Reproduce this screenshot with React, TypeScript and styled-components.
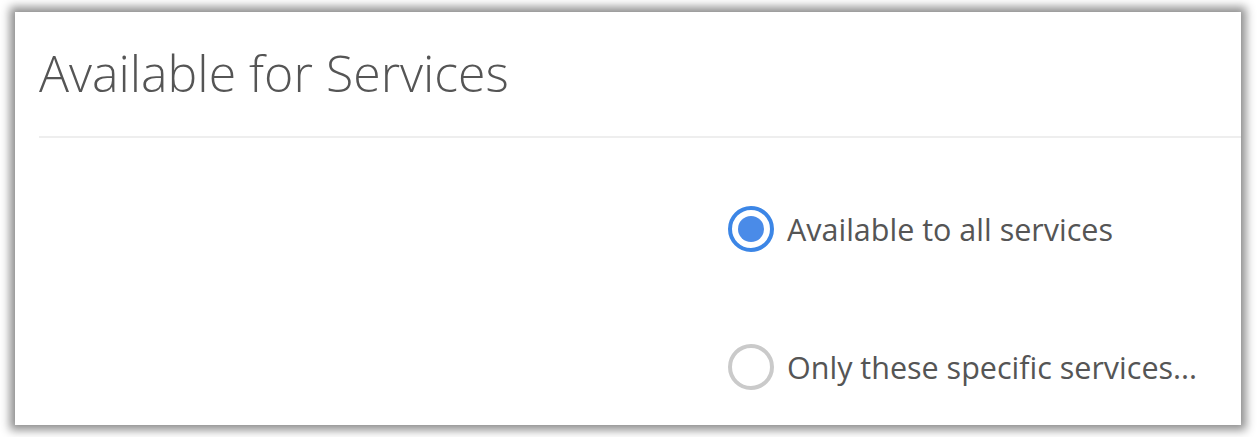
import React from "react";
import styled, { createGlobalStyle } from "styled-components";

const Global = createGlobalStyle`
  html, body { margin: 0; padding: 0; background: #ffffff; }
  body { font-family: "Open Sans", "Liberation Sans", sans-serif; }
`;

const Page = styled.div`
  width: 1260px;
  height: 437px;
  box-sizing: border-box;
  padding: 12px 19px 12px 15px;
  background: #ffffff;
`;

const Panel = styled.section`
  height: 413px;
  background: #ffffff;
  box-shadow: 0 0 9px 5px rgba(0, 0, 0, 0.45);
  padding-left: 24px;
  overflow: hidden;
`;

const Header = styled.header`
  border-bottom: 2px solid #eeeeee;
  height: 126px;
  box-sizing: border-box;
  display: flex;
  align-items: center;
`;

const Title = styled.h2`
  margin: 0 0 2px;
  font-family: "Open Sans", sans-serif;
  font-weight: 300;
  font-size: 50px;
  color: #555555;
  letter-spacing: 0;
`;

const Body = styled.div`
  display: grid;
  grid-template-columns: 689px 1fr;
  padding-top: 68px;
`;

const Options = styled.div`
  display: flex;
  flex-direction: column;
  gap: 92px;
`;

const Option = styled.label`
  display: flex;
  align-items: center;
  gap: 13px;
  font-family: "Open Sans", sans-serif;
  font-size: 30.5px;
  color: #555555;
  cursor: pointer;
`;

const Radio = styled.span<{ $checked?: boolean }>`
  width: 46px;
  height: 46px;
  box-sizing: border-box;
  border-radius: 50%;
  border: 4px solid ${(p) => (p.$checked ? "#3c86e6" : "#cacaca")};
  display: flex;
  align-items: center;
  justify-content: center;
  flex: none;
  &::after {
    content: "";
    width: 26px;
    height: 26px;
    border-radius: 50%;
    background: ${(p) => (p.$checked ? "#4a8be8" : "transparent")};
  }
`;

export default function App() {
  return (
    <>
      <Global />
      <Page>
        <Panel>
          <Header>
            <Title>Available for Services</Title>
          </Header>
          <Body>
            <div />
            <Options>
              <Option>
                <Radio $checked />
                Available to all services
              </Option>
              <Option>
                <Radio />
                Only these specific services...
              </Option>
            </Options>
          </Body>
        </Panel>
      </Page>
    </>
  );
}
